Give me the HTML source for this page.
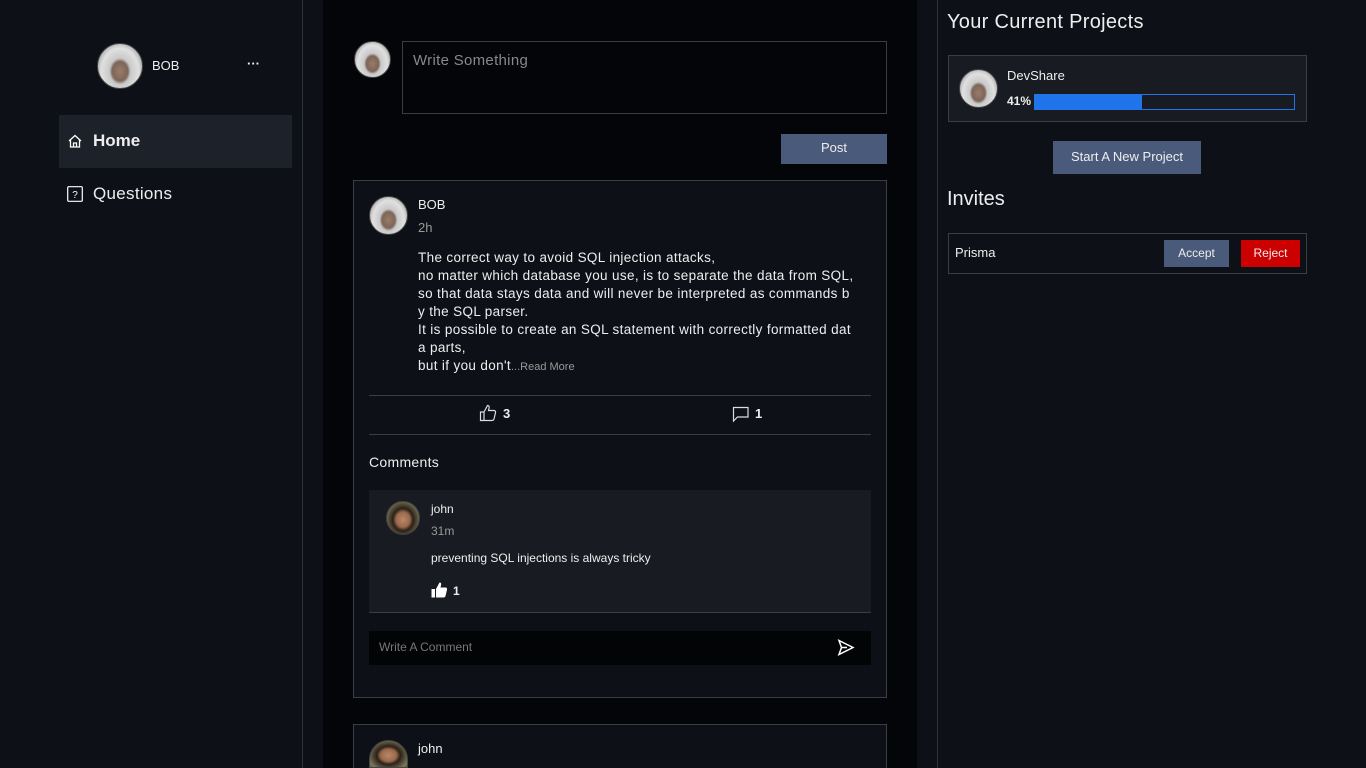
<!DOCTYPE html>
<html style="overflow:hidden;width:1366px;height:768px"><head><style>
*{margin:0;padding:0;box-sizing:border-box}
body{width:1366px;height:768px;overflow:hidden;background:#0d1017;font-family:"Liberation Sans",sans-serif;color:#eee;position:relative}
.a{position:absolute}
.av{position:absolute;border-radius:50%;background:radial-gradient(ellipse at 50% 62%,#9a7c6a 0,#7d6558 25%,#c9c9c9 34%,#e0e0e0 60%,#666 100%);border:1px solid #444}
.avj{background:radial-gradient(ellipse at 50% 55%,#b98868 0,#9a6a4c 30%,#2b2018 45%,#7d7a5a 80%,#333 100%)}
.line{position:absolute;background:#3a3d44}
</style></head><body>
<div class="line" style="left:302px;top:0;width:1px;height:768px;background:#2e3138"></div>
<div class="av" style="left:97px;top:43px;width:46px;height:46px"></div>
<div class="a" style="left:152px;top:58px;font-size:13px">BOB</div>
<div class="a" style="left:247px;top:56px;font-size:13px;font-weight:bold">···</div>
<div class="a" style="left:59px;top:115px;width:233px;height:53px;background:#1d212a"></div>
<svg class="a" style="left:67px;top:133px" width="16" height="16" viewBox="0 0 16 16" fill="none" stroke="#fff" stroke-width="1.3"><path d="M2 8 L8 2.5 L14 8 M3.5 6.8 V14 H12.5 V6.8 M6.5 14 V10 H9.5 V14"/></svg>
<div class="a" style="left:93px;top:131px;font-size:17px;font-weight:bold">Home</div>
<svg class="a" style="left:67px;top:186px" width="16" height="16" viewBox="0 0 16 16"><rect x="0.7" y="0.7" width="14.6" height="14.6" rx="1" fill="none" stroke="#fff" stroke-width="1.2"/><text x="8" y="12" font-size="10" fill="#fff" text-anchor="middle" font-family="Liberation Sans">?</text></svg>
<div class="a" style="left:93px;top:184px;font-size:17px;letter-spacing:0.3px">Questions</div>
<div class="a" style="left:323px;top:0;width:594px;height:768px;background:#040508"></div>
<div class="av" style="left:354px;top:41px;width:37px;height:37px"></div>
<div class="a" style="left:402px;top:41px;width:485px;height:73px;border:1px solid #3a3d44"></div>
<div class="a" style="left:413px;top:52px;font-size:15px;color:#888;letter-spacing:0.3px">Write Something</div>
<div class="a" style="left:781px;top:134px;width:106px;height:30px;background:#4a5a7a;font-size:13px;text-align:center;line-height:27px">Post</div>
<div class="a" style="left:353px;top:180px;width:534px;height:518px;border:1px solid #3a3d44;background:#0d1017"></div>
<div class="av" style="left:369px;top:196px;width:39px;height:39px"></div>
<div class="a" style="left:418px;top:197px;font-size:13px">BOB</div>
<div class="a" style="left:418px;top:220px;font-size:13px;color:#999">2h</div>
<div class="a" style="left:418px;top:249px;font-size:13.5px;letter-spacing:0.35px;line-height:18px;width:470px;white-space:nowrap">The correct way to avoid SQL injection attacks,<br>no matter which database you use, is to separate the data from SQL,<br>so that data stays data and will never be interpreted as commands b<br>y the SQL parser.<br>It is possible to create an SQL statement with correctly formatted dat<br>a parts,<br>but if you don't<span style="color:#999;font-size:11px;letter-spacing:0">...Read More</span></div>
<div class="line" style="left:369px;top:395px;width:502px;height:1px"></div>
<svg class="a" style="left:479px;top:404px" width="18" height="18" viewBox="0 0 18 18" fill="none" stroke="#ddd" stroke-width="1.2"><path d="M1.5 8 H5 V16.5 H1.5 Z M5 8 L8.5 1.5 C10 1.5 10.5 2.5 10 4.5 L9.5 6.5 H15 C16.3 6.5 16.8 7.5 16.5 8.7 L15 15 C14.7 16 14 16.5 13 16.5 H5"/></svg>
<div class="a" style="left:503px;top:406px;font-size:13px;font-weight:bold">3</div>
<svg class="a" style="left:732px;top:406px" width="18" height="17" viewBox="0 0 18 17" fill="none" stroke="#ddd" stroke-width="1.2"><path d="M1.5 1.5 H16 V11 H5.5 L1.5 15 Z"/></svg>
<div class="a" style="left:755px;top:406px;font-size:13px;font-weight:bold">1</div>
<div class="line" style="left:369px;top:434px;width:502px;height:1px"></div>
<div class="a" style="left:369px;top:454px;font-size:14px;letter-spacing:0.3px">Comments</div>
<div class="a" style="left:369px;top:490px;width:502px;height:123px;background:#181b22;border-bottom:1px solid #3a3d44"></div>
<div class="av avj" style="left:386px;top:501px;width:34px;height:34px"></div>
<div class="a" style="left:431px;top:502px;font-size:12px">john</div>
<div class="a" style="left:431px;top:524px;font-size:12px;color:#999">31m</div>
<div class="a" style="left:431px;top:551px;font-size:12px">preventing SQL injections is always tricky</div>
<svg class="a" style="left:431px;top:582px" width="17" height="16" viewBox="0 0 17 16" fill="#fff"><path d="M0.5 7 H4 V15.5 H0.5 Z M5 7 L8.5 0.5 C10 0.5 10.5 1.5 10 3.5 L9.5 5.5 H14.5 C15.8 5.5 16.3 6.5 16 7.7 L14.5 14 C14.2 15 13.5 15.5 12.5 15.5 H5 Z"/></svg>
<div class="a" style="left:453px;top:584px;font-size:12px;font-weight:bold">1</div>
<div class="a" style="left:369px;top:631px;width:502px;height:34px;background:#030406"></div>
<div class="a" style="left:379px;top:640px;font-size:12px;color:#777">Write A Comment</div>
<svg class="a" style="left:837px;top:639px" width="18" height="17" viewBox="0 0 18 17" fill="none" stroke="#fff" stroke-width="1.5"><path d="M2 1.5 L16 8.5 L2 15.5 L4.5 8.5 Z M4.5 8.5 H10"/></svg>
<div class="a" style="left:353px;top:724px;width:534px;height:44px;border:1px solid #3a3d44;border-bottom:none;background:#0d1017"></div>
<div class="av avj" style="left:369px;top:740px;width:39px;height:28px;border-radius:20px 20px 0 0"></div>
<div class="a" style="left:418px;top:741px;font-size:13px">john</div>
<div class="line" style="left:937px;top:0;width:1px;height:768px;background:#2e3138"></div>
<div class="a" style="left:947px;top:11px;font-size:20px;letter-spacing:0.3px">Your Current Projects</div>
<div class="a" style="left:948px;top:55px;width:359px;height:67px;border:1px solid #3a3d44;background:#181b22"></div>
<div class="av" style="left:959px;top:69px;width:39px;height:39px"></div>
<div class="a" style="left:1007px;top:68px;font-size:13px">DevShare</div>
<div class="a" style="left:1007px;top:94px;font-size:12px;font-weight:bold">41%</div>
<div class="a" style="left:1034px;top:94px;width:261px;height:16px;border:1px solid #1e74e8"><div style="width:107px;height:100%;background:#1e74e8"></div></div>
<div class="a" style="left:1053px;top:141px;width:148px;height:33px;background:#4a5a7a;font-size:13px;text-align:center;line-height:31px">Start A New Project</div>
<div class="a" style="left:947px;top:188px;font-size:20px">Invites</div>
<div class="a" style="left:948px;top:233px;width:359px;height:41px;border:1px solid #3a3d44"></div>
<div class="a" style="left:955px;top:245px;font-size:13px">Prisma</div>
<div class="a" style="left:1164px;top:240px;width:65px;height:27px;background:#4a5a7a;font-size:12px;text-align:center;line-height:26px">Accept</div>
<div class="a" style="left:1241px;top:240px;width:59px;height:27px;background:#cc0000;font-size:12px;text-align:center;line-height:26px">Reject</div>
</body></html>
